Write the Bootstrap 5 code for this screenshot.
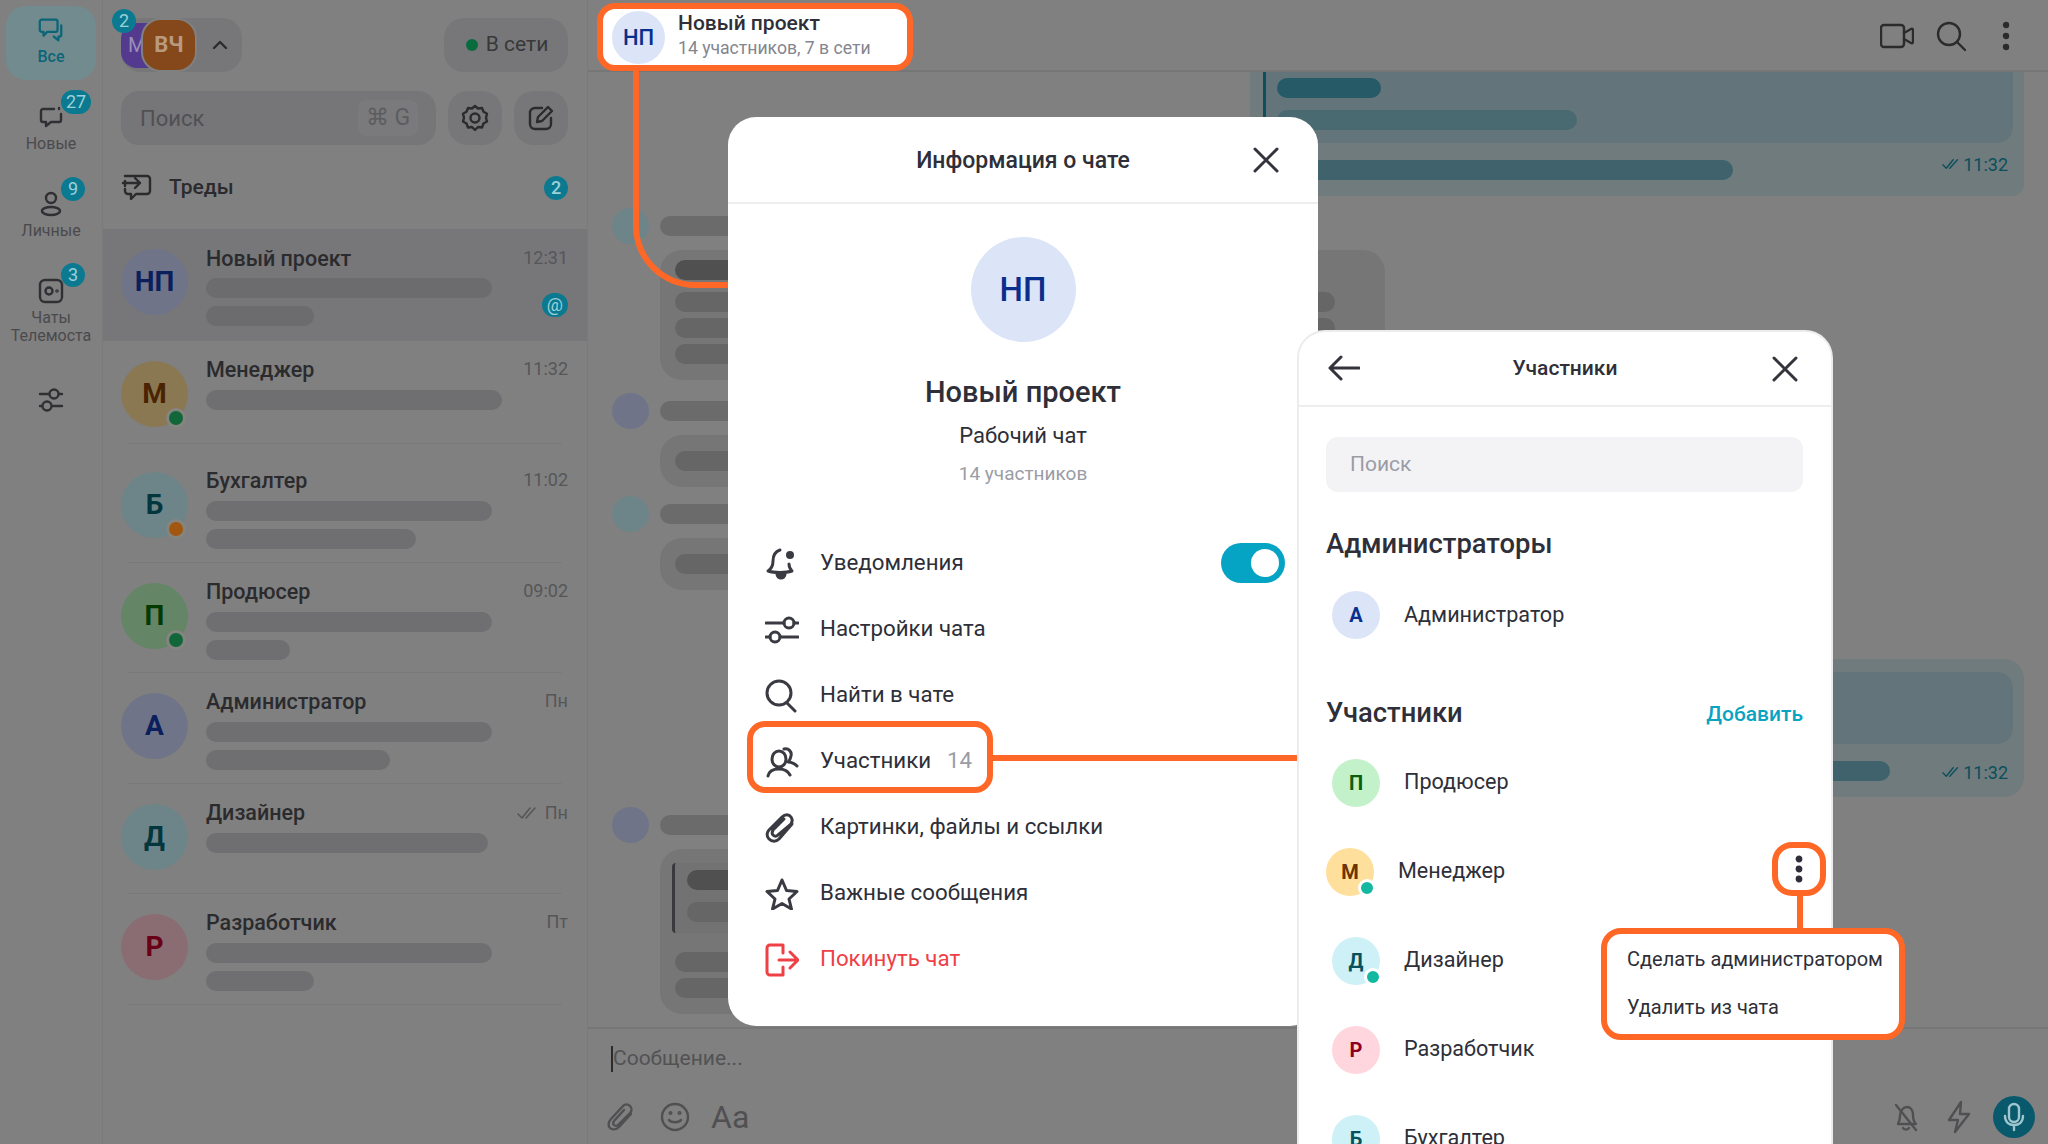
<!DOCTYPE html>
<html lang="ru">
<head>
  <meta charset="UTF-8"/>
  <meta name="viewport" content="width=device-width, initial-scale=1.0"/>
  <title>Информация о чате</title>
  <link rel="stylesheet" href="https://cdn.jsdelivr.net/npm/bootstrap@5.3.0/dist/css/bootstrap.min.css"/>
  <style>
    body { margin: 0; background: #808080; font-family: Roboto, "Liberation Sans", sans-serif; color: #2b2b2e; overflow: hidden; }
    svg { display: block; fill: none; stroke: currentColor; stroke-width: 2.4; stroke-linecap: round; stroke-linejoin: round; }
    .app { position: relative; width: 2048px; height: 1144px; overflow: hidden; }

    /* left rail */
    .rail { width: 103px; flex: none; border-right: 1px solid #7a7a7a; color: #303034; }
    .rail-tile { position: relative; height: 74px; margin: 6px 6px 0; padding-top: 10px; border-radius: 20px; background: #728b8e; color: #0b6578; font-size: 16px; line-height: 18px; font-weight: 500; }
    .rail-item { position: relative; padding-top: 23px; color: #4a4a4d; font-size: 16px; line-height: 18px; text-align: center; height: 87px; }
    .rail-item .ic { margin: 0 auto; color: #303034; }
    .cnt { position: absolute; min-width: 24px; height: 24px; padding: 0 5px; border-radius: 12px; background: #0b7a91; color: #9ad0da; font-size: 18px; line-height: 24px; text-align: center; }
    .cnt-new { left: 61px; top: 10px; }
    .cnt-own { left: 61px; top: 10px; }
    .cnt-tele { left: 61px; top: 9px; }
    .rail-filter { margin-top: 45px; }

    /* chat list */
    .side { width: 485px; flex: none; border-right: 1px solid #7a7a7a; }
    .side-top { height: 91px; padding: 18px 19px 0 18px; }
    .acc-pill { position: relative; width: 121px; height: 54px; border-radius: 20px; background: #777779; }
    .acc-back { position: absolute; left: 0; top: 5px; width: 50px; height: 45px; border-radius: 16px; background: #533a8f; color: #9a8fb8; font-size: 20px; padding: 10px 0 0 7px; line-height: 24px; }
    .acc-front { position: absolute; left: 20px; top: 0; width: 56px; height: 54px; border-radius: 20px; background: #85481a; border: 2px solid #808080; color: #b89a80; font-size: 22px; font-weight: 700; line-height: 50px; text-align: center; }
    .acc-chev { position: absolute; left: 90px; top: 20px; color: #2b2b2e; }
    .cnt-acc { left: -9px; top: -9px; }
    .online-pill { width: 124px; height: 54px; padding-left: 2px; border-radius: 20px; background: #777779; font-size: 21px; color: #38383b; }
    .dot-on { width: 12px; height: 12px; border-radius: 50%; background: #0a6b3e; }
    .search-row { padding-left: 18px; gap: 12px; }
    .search-dim { width: 315px; height: 54px; border-radius: 18px; background: #767678; padding: 0 18px 0 19px; font-size: 22px; color: #505053; }
    .kbd-box { width: 60px; height: 36px; border-radius: 8px; background: #7a7a7c; color: #5c5c5f; font-size: 23px; }
    .square-btn { width: 54px; height: 54px; border-radius: 20px; background: #777779; color: #2b2b2e; }
    .threads { height: 84px; padding: 2px 19px 0 18px; font-size: 21px; font-weight: 500; gap: 16px; }
    .row-chat { position: relative; height: 110.5px; padding: 20px 19px 0 18px; }
    .row-sel { height: 112px; background: #777779; }
    .row-sel .skel { background: #6c6c6f; }
    .row-sel .chat-head { margin-top: -3px; }
    .row-sel .chat-head + .skel { margin-top: 6px; }
    .row-short { height: 103px; }
    .row-long { height: 118.5px; padding-top: 28px; }
    .row-chat.sep::after { content: ""; position: absolute; left: 24px; right: 25px; bottom: 0; height: 1px; background: #797979; }
    .ava-dim { position: relative; width: 67px; height: 66px; flex: none; border-radius: 50%; font-size: 28px; font-weight: 700; }
    .chat-body { position: relative; flex: 1; margin-left: 18px; min-width: 0; }
    .chat-head { margin-top: -4px; }
    .chat-name { font-size: 21.5px; font-weight: 500; line-height: 26px; color: #2b2b2e; }
    .chat-time { font-size: 18px; line-height: 24px; color: #565659; }
    .skel { height: 20px; border-radius: 10px; background: #6f6f72; margin-top: 8px; }
    .chat-head + .skel { margin-top: 7px; }
    .cnt-at { right: 0; top: 44px; }
    .st-dot { position: absolute; right: 2px; bottom: -1px; width: 20px; height: 20px; border-radius: 50%; border: 3px solid #85857f; }
    .st-on { background: #11663a; }
    .st-away { background: #a3560f; }
    .ava-blue { background: #6f7488; color: #0a1f5c; }
    .ava-gold { background: #8a7853; color: #4a2400; }
    .ava-cyan { background: #6d8589; color: #03363d; }
    .ava-green { background: #648566; color: #033a00; }
    .ava-pink { background: #8a6d72; color: #6a0016; }
    .w-108 { width: 108px; } .w-84 { width: 84px; } .w-210 { width: 210px; } .w-184 { width: 184px; }
    .w-286 { width: 286px; } .w-296 { width: 296px; } .w-282 { width: 282px; }

    /* chat area */
    .main-col { flex: 1; min-width: 0; }
    .main-head { height: 72px; padding: 3px 38px 0 9px; border-bottom: 2px solid #767676; }
    .head-tools { height: 66px; gap: 21px; color: #2b2b2e; }
    .head-dots { margin-left: 14px; }
    .main-feed { height: 955px; padding-left: 24px; overflow: hidden; }
    .bubble-out { margin-left: 638px; width: 774px; background: #6f7b7d; padding: 0 11px 0 13px; border-radius: 0 0 12px 12px; }
    .bubble-out-2 { border-radius: 20px; padding-top: 13px; margin-top: 69px; height: 138px; }
    .quote-out { height: 71px; background: #63757b; border-left: 3px solid #0f4f5c; border-radius: 0 0 16px 0; padding: 6px 0 0 11px; }
    .bubble-out-2 .quote-out { height: 72px; border: 0; border-radius: 16px; }
    .bar-a { height: 20px; border-radius: 10px; background: #265a66; width: 104px; }
    .bar-b { height: 20px; border-radius: 10px; background: #4a6a72; width: 300px; margin-top: 12px; }
    .bar-c { height: 20px; border-radius: 10px; background: #3f626c; }
    .w-456 { width: 456px; } .w-613 { width: 613px; }
    .out-foot { margin-top: 17px; padding-left: 14px; padding-right: 5px; color: #0b4f5c; font-size: 18px; }
    .out-time { width: 66px; margin-top: -8px; height: 24px; }
    .bubble-out-2 .out-time { margin-top: -1px; }
    .msg-in { gap: 11px; }
    .msg-gap-first { margin-top: 12px; }
    .msg-gap-a { margin-top: 13px; }
    .msg-gap-b { margin-top: 9px; }
    .msg-gap-c { margin-top: 10px; }
    .msg-ava { width: 37px; height: 36px; flex: none; border-radius: 50%; }
    .msg-name { height: 20px; width: 300px; margin-top: 8px; border-radius: 10px; background: #6b6b6b; }
    .msg-box { background: #767676; border-radius: 22px; padding: 10px 15px 16px; margin-top: 14px; }
    .bar-g { height: 20px; border-radius: 10px; background: #666; width: 660px; margin-top: 6px; }
    .bar-g.first { margin-top: 12px; }
    .bar-d { height: 20px; border-radius: 10px; background: #505050; width: 400px; }
    .quote-in { height: 70px; background: #727272; border-left: 3px solid #3a3a3e; padding: 7px 0 0 12px; margin: 4px 0 19px -3px; border-radius: 4px; }
    .msg-w { width: 725px; }
    .msg-s { width: 400px; }
    .compose { height: 116px; padding: 0 13px 0 23px; position: relative; border-top: 2px solid #767676; }
    .compose-text { height: 60px; font-size: 21px; color: #525255; }
    .caret-bar { width: 2px; height: 26px; background: #2b2b2e; }
    .compose-tools { margin-top: 7px; }
    .tools-left { margin-left: -5px; gap: 24px; color: #505053; }
    .tools-right { gap: 24px; color: #505053; }
    .tool-bolt { margin-right: -4px; }
    .font-aa { margin-left: -3px; font-size: 32px; line-height: 36px; color: #505053; }
    .mic-round { width: 42px; height: 42px; border-radius: 50%; background: #07596b; color: #9fc6cf; }

    /* annotations */
    .tag-box { border: 6px solid #ff6726; background: #fff; }
    .head-chip { width: 316px; height: 68px; border-radius: 18px; padding-left: 9px; gap: 13px; color: #2e2f38; }
    .ava-top { width: 53px; height: 53px; border-radius: 50%; background: #dce4f7; color: #0a2e8c; font-size: 22px; font-weight: 500; }
    .chip-text { padding-bottom: 4px; }
    .chip-name { font-size: 21px; line-height: 25px; font-weight: 500; }
    .chip-sub { font-size: 17.6px; line-height: 24px; color: #83858f; }
    .wire-curve { position: absolute; left: 633px; top: 71px; width: 96px; height: 217px; border-left: 6px solid #ff6726; border-bottom: 6px solid #ff6726; border-bottom-left-radius: 62px; z-index: 1; }
    .wire-h { position: absolute; left: 990px; top: 755px; width: 308px; height: 6px; background: #ff6726; z-index: 3; }
    .wire-v { position: absolute; left: 1797px; top: 894px; width: 6px; height: 36px; background: #ff6726; z-index: 6; }
    .mark-row { position: absolute; left: 747px; top: 721px; width: 246px; height: 72px; border: 6px solid #ff6726; border-radius: 18px; z-index: 3; }
    .mark-dots { position: absolute; left: 1772px; top: 842px; width: 54px; height: 54px; border: 6px solid #ff6726; border-radius: 20px; background: #fff; z-index: 6; color: #2e2f38; }
    .pop-menu { position: absolute; left: 1601px; top: 928px; width: 304px; height: 112px; border-radius: 20px; z-index: 6; padding: 1px 0 0 20px; font-size: 20px; color: #2e2f38; }
    .pop-item { height: 48px; line-height: 48px; white-space: nowrap; }

    /* sheets */
    .sheet-info { position: absolute; left: 728px; top: 117px; width: 590px; height: 909px; border-radius: 28px; background: #fff; color: #2e2f38; z-index: 2; }
    .sheet-head { position: relative; height: 87px; padding-top: 3px; border-bottom: 2px solid #eeeeef; font-size: 23px; font-weight: 500; }
    .x-btn { position: absolute; right: 38px; top: 29px; color: #34353c; stroke-width: 3; }
    .ava-big { width: 105px; height: 105px; border-radius: 50%; background: #dce4f7; color: #0a2e8c; font-size: 33px; font-weight: 500; margin: 33px auto 0; }
    .info-name { font-size: 29px; line-height: 40px; font-weight: 500; margin-top: 30px; }
    .info-type { font-size: 22px; line-height: 32px; margin-top: 8px; }
    .info-count { font-size: 19px; line-height: 28px; margin-top: 8px; color: #9a9ca6; }
    .opt-list { margin-top: 42px; padding: 0 33px 0 37px; }
    .opt-row { height: 66px; font-size: 22.3px; gap: 21px; }
    .opt-ic { width: 34px; flex: none; padding-top: 2px; color: #3a3b42; }
    .opt-ic svg { stroke-width: 3; }
    .opt-num { margin-left: -5px; color: #9a9ca6; }
    .opt-red { color: #ef4046; }
    .opt-red .opt-ic { color: #ef4046; }
    .tgl { position: relative; width: 64px; height: 40px; border-radius: 20px; background: #05a3c4; }
    .tgl::after { content: ""; position: absolute; right: 6px; top: 6px; width: 28px; height: 28px; border-radius: 50%; background: #fff; }

    .sheet-mem { position: absolute; left: 1297px; top: 330px; width: 536px; height: 840px; border: 2px solid #ececee; border-radius: 28px; background: #fff; color: #2e2f38; z-index: 4; padding-bottom: 40px; }
    .mem-head { position: relative; height: 77px; margin-top: -2px; padding-top: 2px; border-bottom: 2px solid #eeeeef; font-size: 21px; font-weight: 500; }
    .mem-back { position: absolute; left: 29px; top: 25px; color: #34353c; stroke-width: 3; }
    .mem-x { right: 33px; top: 26px; }
    .mem-body { padding: 30px 28px 0 27px; }
    .mem-search { height: 55px; border-radius: 12px; background: #f3f3f5; padding-left: 24px; font-size: 21px; color: #9a9ca6; }
    .mem-title { height: 40px; font-size: 27.4px; font-weight: 500; line-height: 38px; }
    .mt-a { margin-top: 33px; } .mt-b { margin-top: 33px; }
    .mem-gap { margin-top: 5.5px; }
    .mem-add { font-size: 21px; font-weight: 500; color: #0aa3c2; padding-top: 3px; }
    .mem-row { height: 89px; padding-left: 6px; gap: 24px; font-size: 21.6px; }
    .mem-row.flush { padding-left: 0; }
    .mem-ava { position: relative; width: 48px; height: 48px; flex: none; border-radius: 50%; font-size: 20px; font-weight: 700; }
    .mem-blue { background: #dce4f7; color: #0a2e8c; }
    .mem-green { background: #c3f1c9; color: #0b5d10; }
    .mem-gold { background: #ffdf9c; color: #6b3400; }
    .mem-cyan { background: #cdf1f6; color: #07515c; }
    .mem-pink { background: #ffd6dd; color: #8c0020; }
    .mem-dot { position: absolute; right: -2px; bottom: -1px; width: 18px; height: 18px; border-radius: 50%; background: #14b8a0; border: 3px solid #fff; }
  </style>
</head>
<body>
<div class="app d-flex">

  <!-- rail -->
  <div class="rail">
    <div class="rail-tile d-flex flex-column align-items-center">
      <svg width="28" height="28" viewBox="0 0 30 30"><path d="M5 4h15a2 2 0 0 1 2 2v9a2 2 0 0 1-2 2H11l-4 4v-4H5a2 2 0 0 1-2-2V6a2 2 0 0 1 2-2z"/><path d="M26 10v10a2 2 0 0 1-2 2h-1v4l-5-4"/></svg>
      <div class="mt-1">Все</div>
    </div>
    <div class="rail-item">
      <span class="cnt cnt-new">27</span>
      <svg class="ic" width="28" height="28" viewBox="0 0 28 28"><path d="M17 6H6a2 2 0 0 0-2 2v9a2 2 0 0 0 2 2h3v4l5-4h8a2 2 0 0 0 2-2v-6"/><path d="M22 5v1"/></svg>
      <div class="mt-1">Новые</div>
    </div>
    <div class="rail-item">
      <span class="cnt cnt-own">9</span>
      <svg class="ic" width="28" height="28" viewBox="0 0 28 28"><circle cx="14" cy="8" r="5"/><ellipse cx="14" cy="21" rx="9" ry="4"/></svg>
      <div class="mt-1">Личные</div>
    </div>
    <div class="rail-item">
      <span class="cnt cnt-tele">3</span>
      <svg class="ic" width="28" height="28" viewBox="0 0 28 28"><rect x="3" y="3" width="22" height="22" rx="5"/><circle cx="12" cy="14" r="3.500"/><circle cx="20" cy="14" r=".6"/></svg>
      <div class="mt-1">Чаты<br/>Телемоста</div>
    </div>
    <div class="rail-filter d-flex justify-content-center">
      <svg width="28" height="28" viewBox="0 0 28 28"><circle cx="17" cy="8" r="4.500"/><path d="M3 8h9M22 8h3"/><circle cx="10" cy="20" r="4.500"/><path d="M3 20h2M15 20h10"/></svg>
    </div>
  </div>

  <!-- chat list -->
  <div class="side">
    <div class="side-top d-flex justify-content-between">
      <div class="acc-pill">
        <div class="acc-back">М</div>
        <div class="acc-front">ВЧ</div>
        <svg class="acc-chev" width="18" height="14" viewBox="0 0 18 14"><path d="M3 10l6-6 6 6"/></svg>
        <span class="cnt cnt-acc">2</span>
      </div>
      <div class="online-pill d-flex align-items-center justify-content-center gap-2"><span class="dot-on"></span>В сети</div>
    </div>
    <div class="search-row d-flex">
      <div class="search-dim d-flex align-items-center justify-content-between"><span>Поиск</span><span class="kbd-box d-flex align-items-center justify-content-center gap-1">⌘ G</span></div>
      <div class="square-btn d-flex align-items-center justify-content-center">
        <svg width="30" height="30" viewBox="0 0 30 30"><path d="M15 3l3 2.500 4-.5 1.500 3.700 3.500 2-1 4 1 3.800-3.500 2L22 24.500l-4-.5-3 3-3-3-4 .5-1.500-4-3.500-2 1-3.800-1-4 3.500-2L8 5l4 .5z"/><circle cx="15" cy="15" r="4.500"/></svg>
      </div>
      <div class="square-btn d-flex align-items-center justify-content-center">
        <svg width="30" height="30" viewBox="0 0 30 30"><path d="M16 5H9a5 5 0 0 0-5 5v11a5 5 0 0 0 5 5h11a5 5 0 0 0 5-5v-6"/><path d="M11 19l1-5L22 4l4 4-10 10z"/></svg>
      </div>
    </div>
    <div class="threads d-flex align-items-center">
      <svg width="32" height="30" viewBox="0 0 32 30"><path d="M4 3h22a3 3 0 0 1 3 3v12a3 3 0 0 1-3 3H15l-5 5v-5H7a3 3 0 0 1-3-3v-2"/><path d="M4 8v5M2 10h17M14 5l5 5-5 5"/></svg>
      <span class="flex-grow-1">Треды</span>
      <span class="cnt position-static">2</span>
    </div>

    <div class="row-chat row-sel d-flex">
      <div class="ava-dim ava-blue d-flex align-items-center justify-content-center">НП</div>
      <div class="chat-body">
        <div class="chat-head d-flex justify-content-between"><div class="chat-name">Новый проект</div><div class="chat-time">12:31</div></div>
        <div class="skel w-286"></div>
        <div class="skel w-108"></div>
        <span class="cnt cnt-at">@</span>
      </div>
    </div>
    <div class="row-chat row-short sep d-flex">
      <div class="ava-dim ava-gold d-flex align-items-center justify-content-center">М<span class="st-dot st-on"></span></div>
      <div class="chat-body">
        <div class="chat-head d-flex justify-content-between"><div class="chat-name">Менеджер</div><div class="chat-time">11:32</div></div>
        <div class="skel w-296"></div>
      </div>
    </div>
    <div class="row-chat row-long sep d-flex">
      <div class="ava-dim ava-cyan d-flex align-items-center justify-content-center">Б<span class="st-dot st-away"></span></div>
      <div class="chat-body">
        <div class="chat-head d-flex justify-content-between"><div class="chat-name">Бухгалтер</div><div class="chat-time">11:02</div></div>
        <div class="skel w-286"></div>
        <div class="skel w-210"></div>
      </div>
    </div>
    <div class="row-chat sep d-flex">
      <div class="ava-dim ava-green d-flex align-items-center justify-content-center">П<span class="st-dot st-on"></span></div>
      <div class="chat-body">
        <div class="chat-head d-flex justify-content-between"><div class="chat-name">Продюсер</div><div class="chat-time">09:02</div></div>
        <div class="skel w-286"></div>
        <div class="skel w-84"></div>
      </div>
    </div>
    <div class="row-chat sep d-flex">
      <div class="ava-dim ava-blue d-flex align-items-center justify-content-center">А</div>
      <div class="chat-body">
        <div class="chat-head d-flex justify-content-between"><div class="chat-name">Администратор</div><div class="chat-time">Пн</div></div>
        <div class="skel w-286"></div>
        <div class="skel w-184"></div>
      </div>
    </div>
    <div class="row-chat sep d-flex">
      <div class="ava-dim ava-cyan d-flex align-items-center justify-content-center">Д</div>
      <div class="chat-body">
        <div class="chat-head d-flex justify-content-between"><div class="chat-name">Дизайнер</div>
          <div class="chat-time d-flex align-items-center gap-2"><svg width="20" height="14" viewBox="0 0 20 14"><path d="M1 8l4 4 8-10M9 12l9-10" stroke-width="1.600"/></svg>Пн</div></div>
        <div class="skel w-282"></div>
      </div>
    </div>
    <div class="row-chat sep d-flex">
      <div class="ava-dim ava-pink d-flex align-items-center justify-content-center">Р</div>
      <div class="chat-body">
        <div class="chat-head d-flex justify-content-between"><div class="chat-name">Разработчик</div><div class="chat-time">Пт</div></div>
        <div class="skel w-286"></div>
        <div class="skel w-108"></div>
      </div>
    </div>
  </div>

  <!-- chat area -->
  <div class="main-col">
    <div class="main-head d-flex justify-content-between">
      <div class="tag-box head-chip d-flex align-items-center">
        <div class="ava-top d-flex align-items-center justify-content-center">НП</div>
        <div class="chip-text">
          <div class="chip-name">Новый проект</div>
          <div class="chip-sub">14 участников, 7 в сети</div>
        </div>
      </div>
      <div class="head-tools d-flex align-items-center">
        <svg width="34" height="26" viewBox="0 0 34 26"><rect x="1" y="2" width="23" height="22" rx="3"/><path d="M24 10l7-4c1-.5 2 0 2 1v12c0 1-1 1.500-2 1l-7-4"/></svg>
        <svg width="32" height="32" viewBox="0 0 32 32"><circle cx="14" cy="14" r="11"/><path d="M22 22l8 8"/></svg>
        <svg class="head-dots" width="8" height="30" viewBox="0 0 8 30"><circle cx="4" cy="4" r="2" fill="currentColor"/><circle cx="4" cy="15" r="2" fill="currentColor"/><circle cx="4" cy="26" r="2" fill="currentColor"/></svg>
      </div>
    </div>
    <div class="main-feed">
      <div class="bubble-out">
        <div class="quote-out"><div class="bar-a"></div><div class="bar-b"></div></div>
        <div class="d-flex justify-content-between out-foot pb-3"><div class="bar-c w-456"></div>
          <div class="d-flex align-items-center gap-1 out-time"><svg width="20" height="14" viewBox="0 0 20 14"><path d="M1 8l4 4 8-10M9 12l9-10" stroke-width="1.600"/></svg>11:32</div></div>
      </div>
      <div class="d-flex msg-in msg-gap-first">
        <div class="msg-ava ava-cyan"></div>
        <div>
          <div class="msg-name"></div>
          <div class="msg-box msg-w"><div class="bar-d"></div><div class="bar-g first"></div><div class="bar-g"></div><div class="bar-g"></div></div>
        </div>
      </div>
      <div class="d-flex msg-in msg-gap-a">
        <div class="msg-ava ava-blue"></div>
        <div>
          <div class="msg-name"></div>
          <div class="msg-box msg-s"><div class="bar-g w-84"></div></div>
        </div>
      </div>
      <div class="d-flex msg-in msg-gap-b">
        <div class="msg-ava ava-cyan"></div>
        <div>
          <div class="msg-name"></div>
          <div class="msg-box msg-s"><div class="bar-g w-84"></div></div>
        </div>
      </div>
      <div class="bubble-out bubble-out-2">
        <div class="quote-out"></div>
        <div class="d-flex justify-content-between out-foot"><div class="bar-c w-613"></div>
          <div class="d-flex align-items-center gap-1 out-time"><svg width="20" height="14" viewBox="0 0 20 14"><path d="M1 8l4 4 8-10M9 12l9-10" stroke-width="1.600"/></svg>11:32</div></div>
      </div>
      <div class="d-flex msg-in msg-gap-c">
        <div class="msg-ava ava-blue"></div>
        <div>
          <div class="msg-name"></div>
          <div class="msg-box msg-s"><div class="quote-in"><div class="bar-d w-108"></div><div class="bar-g w-108 first"></div></div><div class="bar-g w-108"></div><div class="bar-g w-108"></div></div>
        </div>
      </div>
    </div>
    <div class="compose">
      <div class="compose-text d-flex align-items-center"><span class="caret-bar"></span>Сообщение...</div>
      <div class="compose-tools d-flex align-items-center justify-content-between">
        <div class="tools-left d-flex align-items-center">
          <svg width="30" height="32" viewBox="0 0 30 32"><path d="M25 13L13 26c-3 3-7 3-9 1s-2-6 1-9L17 5c2-2 5-2 7 0s2 5 0 7L12 24c-1 1-3 1-4 0s-1-3 0-4L18 9"/></svg>
          <svg width="30" height="30" viewBox="0 0 30 30"><circle cx="15" cy="15" r="13"/><path d="M9 18c2 3 10 3 12 0"/><circle cx="10.500" cy="11" r=".8"/><circle cx="19.500" cy="11" r=".8"/></svg>
          <span class="font-aa">Aa</span>
        </div>
        <div class="tools-right d-flex align-items-center">
          <svg width="30" height="32" viewBox="0 0 30 32"><path d="M7 23c1-2 2-4 2-8 0-5 3-9 7-9s6 4 6 8c0 4 1 7 3 9H7z"/><path d="M12 27c1 2 5 2 6 0M5 4l20 25"/></svg>
          <svg class="tool-bolt" width="28" height="34" viewBox="0 0 28 34"><path d="M16 2L4 20h9l-3 12 14-18h-9z"/></svg>
          <div class="mic-round d-flex align-items-center justify-content-center">
            <svg width="24" height="30" viewBox="0 0 24 30"><rect x="7" y="2" width="10" height="18" rx="5"/><path d="M3 14c0 6 4 9 9 9s9-3 9-9M12 23v5"/></svg>
          </div>
        </div>
      </div>
    </div>
  </div>

  <!-- connectors and highlighted bits -->
  <div class="wire-curve"></div>
  <div class="wire-h"></div>
  <div class="wire-v"></div>
  <div class="mark-row"></div>

  <div class="sheet-info">
    <div class="sheet-head d-flex align-items-center justify-content-center">
      Информация о чате
      <svg class="x-btn" width="28" height="28" viewBox="0 0 28 28"><path d="M3 3l22 22M25 3L3 25"/></svg>
    </div>
    <div class="ava-big d-flex align-items-center justify-content-center">НП</div>
    <div class="info-name text-center">Новый проект</div>
    <div class="info-type text-center">Рабочий чат</div>
    <div class="info-count text-center">14 участников</div>
    <div class="opt-list">
      <div class="opt-row d-flex align-items-center">
        <div class="opt-ic"><svg width="32" height="34" viewBox="0 0 32 34"><path d="M15 3C9 5 8 10 8 14c0 5-2 8-5 10 6 2 18 2 24 0-2-2-3-4-3-7"/><path d="M12 27a4 4 0 0 0 8 0" fill="currentColor"/><circle cx="25" cy="8" r="4" fill="currentColor" stroke="none"/></svg></div>
        <span class="flex-grow-1">Уведомления</span>
        <div class="tgl"></div>
      </div>
      <div class="opt-row d-flex align-items-center">
        <div class="opt-ic"><svg width="34" height="30" viewBox="0 0 34 30"><path d="M1 8h18M29 8h4M1 22h4M15 22h18"/><circle cx="24" cy="8" r="5"/><circle cx="10" cy="22" r="5"/></svg></div>
        <span>Настройки чата</span>
      </div>
      <div class="opt-row d-flex align-items-center">
        <div class="opt-ic"><svg width="32" height="34" viewBox="0 0 32 34"><circle cx="14" cy="14" r="12"/><path d="M22 24l8 8"/></svg></div>
        <span>Найти в чате</span>
      </div>
      <div class="opt-row d-flex align-items-center">
        <div class="opt-ic"><svg width="34" height="32" viewBox="0 0 34 32"><ellipse cx="14" cy="13" rx="7" ry="8"/><path d="M3 30c1-5 6-7 11-7s9 2 11 6M19 3c5-1 8 3 7 7-.5 3-2 5-3 6 3 0 7 2 9 4"/></svg></div>
        <span>Участники</span><span class="opt-num">14</span>
      </div>
      <div class="opt-row d-flex align-items-center">
        <div class="opt-ic"><svg width="32" height="32" viewBox="0 0 32 32"><path d="M27 12L14 27c-3 3-7 3-10 0s-2-7 0-9L17 5c3-3 7-3 9 0s1 6-1 8L13 23c-2 2-4 1-5 0s-1-3 0-5L19 7"/></svg></div>
        <span>Картинки, файлы и ссылки</span>
      </div>
      <div class="opt-row d-flex align-items-center">
        <div class="opt-ic"><svg width="34" height="32" viewBox="0 0 34 32"><path d="M17 2l4.500 10.500L32 13.500l-8 7.500 2.500 10L17 25.500 7.500 31 10 21l-8-7.500 10.500-1z"/></svg></div>
        <span>Важные сообщения</span>
      </div>
      <div class="opt-row opt-red d-flex align-items-center">
        <div class="opt-ic"><svg width="34" height="34" viewBox="0 0 34 34"><path d="M18 10V2H5a3 3 0 0 0-3 3v24a3 3 0 0 0 3 3h13v-8M14 17h18M25 9l8 8-8 8"/></svg></div>
        <span>Покинуть чат</span>
      </div>
    </div>
  </div>

  <div class="sheet-mem">
    <div class="mem-head d-flex align-items-center justify-content-center">
      <svg class="mem-back" width="32" height="26" viewBox="0 0 32 26"><path d="M31 13H2M13 2L2 13l11 11"/></svg>
      Участники
      <svg class="x-btn mem-x" width="26" height="26" viewBox="0 0 26 26"><path d="M2 2l22 22M24 2L2 24"/></svg>
    </div>
    <div class="mem-body">
      <div class="mem-search d-flex align-items-center">Поиск</div>
      <div class="mem-title mt-a">Администраторы</div>
      <div class="mem-row d-flex align-items-center mem-gap">
        <div class="mem-ava mem-blue d-flex align-items-center justify-content-center">А</div>Администратор
      </div>
      <div class="d-flex justify-content-between align-items-center mem-title mt-b"><span>Участники</span><span class="mem-add">Добавить</span></div>
      <div class="mem-row d-flex align-items-center mem-gap">
        <div class="mem-ava mem-green d-flex align-items-center justify-content-center">П</div>Продюсер
      </div>
      <div class="mem-row flush d-flex align-items-center">
        <div class="mem-ava mem-gold d-flex align-items-center justify-content-center">М<span class="mem-dot"></span></div>Менеджер
      </div>
      <div class="mem-row d-flex align-items-center">
        <div class="mem-ava mem-cyan d-flex align-items-center justify-content-center">Д<span class="mem-dot"></span></div>Дизайнер
      </div>
      <div class="mem-row d-flex align-items-center">
        <div class="mem-ava mem-pink d-flex align-items-center justify-content-center">Р</div>Разработчик
      </div>
      <div class="mem-row d-flex align-items-center">
        <div class="mem-ava mem-cyan d-flex align-items-center justify-content-center">Б</div>Бухгалтер
      </div>
    </div>
  </div>

  <div class="mark-dots d-flex align-items-center justify-content-center">
    <svg width="8" height="30" viewBox="0 0 8 30"><circle cx="4" cy="5" r="2.200" fill="currentColor"/><circle cx="4" cy="15" r="2.200" fill="currentColor"/><circle cx="4" cy="25" r="2.200" fill="currentColor"/></svg>
  </div>
  <div class="pop-menu tag-box">
    <div class="pop-item">Сделать администратором</div>
    <div class="pop-item">Удалить из чата</div>
  </div>
</div>
<script src="https://cdn.jsdelivr.net/npm/bootstrap@5.3.0/dist/js/bootstrap.bundle.min.js"></script>
</body>
</html>
